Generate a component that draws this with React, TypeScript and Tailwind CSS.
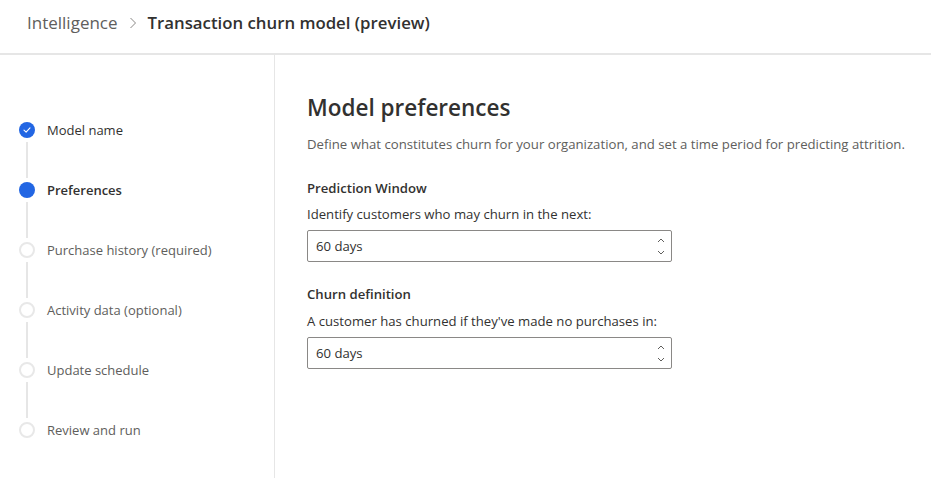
import React from 'react';

type StepState = 'done' | 'current' | 'todo';

interface Step {
  label: string;
  state: StepState;
}

const steps: Step[] = [
  { label: 'Model name', state: 'done' },
  { label: 'Preferences', state: 'current' },
  { label: 'Purchase history (required)', state: 'todo' },
  { label: 'Activity data (optional)', state: 'todo' },
  { label: 'Update schedule', state: 'todo' },
  { label: 'Review and run', state: 'todo' },
];

const StepDot: React.FC<{ state: StepState }> = ({ state }) => {
  if (state === 'done') {
    return (
      <div className="w-4 h-4 rounded-full bg-[#2266e3] flex items-center justify-center">
        <svg width="8" height="8" viewBox="0 0 8 8" fill="none">
          <path d="M1 4.2 L3.1 6.1 L7 1.9" stroke="white" strokeWidth="1.1" strokeLinecap="round" strokeLinejoin="round" />
        </svg>
      </div>
    );
  }
  if (state === 'current') {
    return <div className="w-4 h-4 rounded-full bg-[#2266e3]" />;
  }
  return <div className="w-4 h-4 rounded-full border-2 border-[#e8e8e8] bg-white" />;
};

const Spinner: React.FC<{ value: string }> = ({ value }) => (
  <div className="w-[365px] h-[32px] border border-[#8a8886] rounded-[2px] flex items-center justify-between pl-[8px] pr-[6px] text-[13.15px] text-[#323130]">
    <span className="pt-[1px]">{value}</span>
    <div className="flex flex-col items-center gap-[7px]">
      <svg width="8" height="5" viewBox="0 0 8 5" fill="none">
        <path d="M1 4 L4 1 L7 4" stroke="#605e5c" strokeWidth="1" />
      </svg>
      <svg width="8" height="5" viewBox="0 0 8 5" fill="none">
        <path d="M1 1 L4 4 L7 1" stroke="#605e5c" strokeWidth="1" />
      </svg>
    </div>
  </div>
);

export default function App() {
  return (
    <div
      className="w-[931px] h-[478px] bg-white overflow-hidden flex flex-col"
      style={{ fontFamily: '"Open Sans", "Noto Sans", sans-serif' }}
    >
      {/* Breadcrumb header */}
      <div className="h-[55px] shrink-0 flex items-center pl-[27px] pb-[8px] border-b-2 border-[#e6e6e6]">
        <span className="text-[17px] text-[#605e5c]">Intelligence</span>
        <svg className="mx-[11px]" width="8" height="12" viewBox="0 0 8 12" fill="none">
          <path d="M1.5 1 L6.5 6 L1.5 11" stroke="#8a8886" strokeWidth="1" />
        </svg>
        <span className="text-[16.8px] font-semibold text-[#323130]">Transaction churn model (preview)</span>
      </div>

      <div className="flex flex-1 min-h-0">
        {/* Steps sidebar */}
        <div className="w-[275px] shrink-0 border-r border-[#e6e6e6] pt-[67px] pl-[19px]">
          {steps.map((s, i) => (
            <div key={s.label} className="flex">
              <div className="flex flex-col items-center w-4">
                <StepDot state={s.state} />
                {i < steps.length - 1 && (
                  <div className="w-[2px] h-[36px] my-[4px] bg-[#e6e6e6]" />
                )}
              </div>
              <span
                className={`ml-[12px] text-[13px] leading-4 ${
                  s.state === 'current'
                    ? 'font-semibold text-[#323130]'
                    : s.state === 'done'
                    ? 'text-[#323130]'
                    : 'text-[#605e5c]'
                }`}
              >
                {s.label}
              </span>
            </div>
          ))}
        </div>

        {/* Main content */}
        <div className="flex-1 pl-[32px] pt-[37px]">
          <h1 className="text-[22.5px] font-semibold text-[#323130] leading-[32px]">Model preferences</h1>
          <p className="mt-[10px] text-[13.2px] text-[#605e5c] leading-5">
            Define what constitutes churn for your organization, and set a time period for predicting attrition.
          </p>

          <div className="mt-[24px] text-[13.15px] font-semibold text-[#323130] leading-5">Prediction Window</div>
          <div className="mt-[6px] text-[13.15px] text-[#323130] leading-5">Identify customers who may churn in the next:</div>
          <div className="mt-[6px]">
            <Spinner value="60 days" />
          </div>

          <div className="mt-[22px] text-[13.15px] font-semibold text-[#323130] leading-5">Churn definition</div>
          <div className="mt-[7px] text-[13.15px] text-[#323130] leading-5">A customer has churned if they've made no purchases in:</div>
          <div className="mt-[6px]">
            <Spinner value="60 days" />
          </div>
        </div>
      </div>
    </div>
  );
}
